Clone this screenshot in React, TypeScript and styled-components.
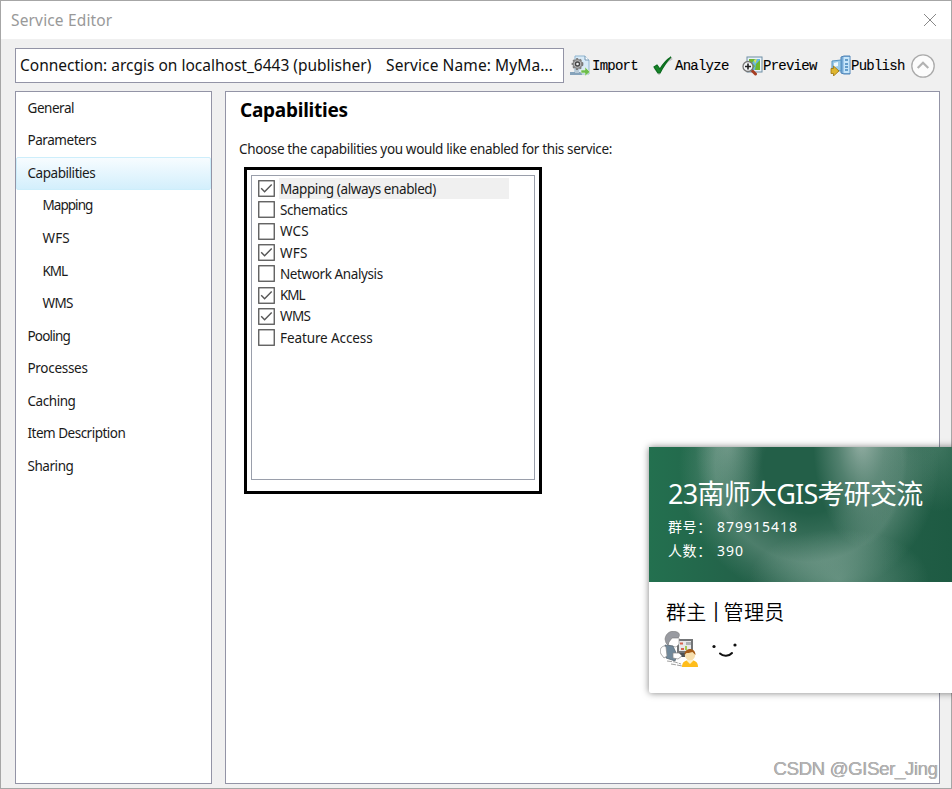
import React from 'react';
import styled, { createGlobalStyle } from 'styled-components';

const Global = createGlobalStyle`
  * { box-sizing: border-box; }
  html, body { margin: 0; padding: 0; overflow: hidden; }
  body { font-family: "Noto Sans", "Noto Sans CJK SC", sans-serif; color: #1a1a1a; }
`;

const Desktop = styled.div`
  position: relative;
  width: 952px;
  height: 789px;
  overflow: hidden;
`;

const Window = styled.div`
  width: 952px;
  height: 789px;
  display: flex;
  flex-direction: column;
  background: #f0f0f0;
  border: 1px solid #a6a6a6;
  overflow: hidden;
`;

const TitleBar = styled.header`
  height: 38px;
  flex: none;
  display: flex;
  align-items: center;
  justify-content: space-between;
  padding: 0 14px 0 10px;
  background: #fff;
`;

const Label = styled.span<{ $size: number; $spacing?: number; $color?: string }>`
  font-size: ${p => p.$size}px;
  letter-spacing: ${p => p.$spacing ?? 0}px;
  color: ${p => p.$color ?? '#1a1a1a'};
  line-height: 20px;
  white-space: pre;
`;

const Toolbar = styled.div`
  flex: none;
  height: 52px;
  display: flex;
  align-items: center;
  padding: 1px 15px 0 14px;
`;

const ConnectionBox = styled.div`
  width: 549px;
  height: 35px;
  flex: none;
  display: flex;
  align-items: center;
  justify-content: space-between;
  padding: 0 10px 2px 4px;
  border: 1.5px solid #9394a6;
  background: #fff;
`;

const ToolButton = styled.button<{ $left: number; $width: number; $gap: number }>`
  display: flex;
  align-items: center;
  gap: ${p => p.$gap}px;
  flex: none;
  width: ${p => p.$width}px;
  margin: 0 0 0 ${p => p.$left}px;
  padding: 0;
  border: 0;
  background: none;
  color: #000;
  font: 14px "Liberation Mono", monospace;
  letter-spacing: -0.75px;
  -webkit-text-stroke: 0.1px #000;
  svg { flex: none; }
`;

const CollapseButton = styled.button`
  flex: none;
  margin: 0 0 0 6px;
  padding: 0;
  border: 0;
  background: none;
  display: flex;
`;

const Body = styled.main`
  flex: none;
  height: 693px;
  display: grid;
  grid-template-columns: 197px 715px;
  column-gap: 13px;
  padding-left: 14px;
`;

const Panel = styled.section`
  border: 1.5px solid #9394a6;
  background: #fff;
`;

const NavItem = styled.div<{ $nested?: boolean; $selected?: boolean }>`
  height: 32.55px;
  display: flex;
  align-items: center;
  padding: 0 0 1px ${p => (p.$nested ? 25.5 : 10.5)}px;
  border: 1px solid ${p => (p.$selected ? '#cdeefb' : 'transparent')};
  border-radius: 2px;
  background: ${p => (p.$selected ? 'linear-gradient(#f7fcff, #d3effc)' : 'none')};
`;

const Content = styled(Panel)`
  display: flex;
  flex-direction: column;
  align-items: flex-start;
  padding: 5px 0 0 14px;
`;

const Heading = styled.h1`
  margin: 0;
  font-size: 19px;
  line-height: 26px;
  letter-spacing: -0.25px;
  color: #000;
`;

const Intro = styled.p`
  margin: 16px 0 8px -1px;
  height: 20px;
  display: flex;
`;

const ListFrame = styled.div`
  width: 298px;
  height: 327px;
  margin-left: 4px;
  padding: 5px 4px 11px 4px;
  border: 3px solid #000;
  display: flex;
`;

const CapabilityList = styled.div`
  flex: 1;
  padding: 2px 0 0 6px;
  border: 1px solid #9a9fab;
`;

const CapabilityRow = styled.label`
  height: 21.3px;
  display: flex;
  align-items: center;
  gap: 4px;
  svg { flex: none; }
`;

const CapabilityName = styled.span<{ $highlight?: boolean }>`
  width: 230px;
  height: 21.3px;
  display: flex;
  align-items: center;
  padding: 0 0 0 1px;
  background: ${p => (p.$highlight ? '#f0f0f0' : 'none')};
`;

const GroupCard = styled.aside`
  position: absolute;
  left: 649px;
  top: 447px;
  width: 310px;
  height: 246px;
  display: flex;
  flex-direction: column;
  border-radius: 2px;
  background: #fff;
  box-shadow: 0 0 7px rgba(0, 0, 0, 0.5);
`;

const GroupHeader = styled.div`
  height: 135px;
  display: flex;
  flex-direction: column;
  padding: 29px 0 0 19px;
  color: #fff;
  background:
    radial-gradient(ellipse 48px 110px at 212px -10px, rgba(215, 222, 219, .62), rgba(190, 205, 199, .3) 50%, transparent),
    radial-gradient(ellipse 34px 80px at 80px -5px, rgba(190, 205, 199, .36), transparent),
    radial-gradient(ellipse 90px 50px at 190px 132px, rgba(190, 212, 203, .36), transparent),
    radial-gradient(ellipse 130px 132px at 160px 20px, transparent 35%, rgba(165, 190, 180, .14) 52%, rgba(165, 190, 180, .32) 72%, rgba(165, 190, 180, .12) 88%, transparent 100%),
    radial-gradient(ellipse 40px 70px at 290px -5px, rgba(150, 185, 170, .28), transparent),
    linear-gradient(90deg, #23704f, #235f48 35%, #235f48 75%, #1d5a42);
`;

const GroupTitle = styled.h2`
  margin: 0 0 5px;
  font: 400 27px/36px "Noto Sans", "Noto Sans CJK SC", sans-serif;
  letter-spacing: -0.75px;
  white-space: nowrap;
`;

const GroupMeta = styled.div`
  display: flex;
  height: 24px;
  line-height: 19px;
  font-size: 14px;
`;

const MetaKey = styled.span`
  width: 49px;
  letter-spacing: 0.6px;
`;

const MetaValue = styled.span`
  letter-spacing: 1px;
`;

const GroupStaff = styled.div`
  display: flex;
  flex-direction: column;
  align-items: flex-start;
  padding: 14px 0 0 17px;
  color: #000;
`;

const StaffTitle = styled.div`
  height: 31px;
  display: flex;
  align-items: center;
  gap: 4px;
  font: 400 20px/31px "Noto Sans CJK SC", sans-serif;
  font-weight: 350;
  letter-spacing: 0.3px;
  white-space: nowrap;
`;

const StaffDivider = styled.span`
  width: 9px;
  text-align: center;
  font: 400 20px/28px "Noto Sans", sans-serif;
  padding-bottom: 3px;
`;

const Avatars = styled.div`
  display: flex;
  gap: 12px;
  margin: 4px 0 0 -6px;
`;

const Watermark = styled.div`
  position: absolute;
  right: 14px;
  bottom: 7px;
  font: 18.6px/26px "Liberation Sans", sans-serif;
  letter-spacing: -0.35px;
  color: #b4b4b4;
  text-shadow: -0.5px -0.5px 0 #8f8f8f, 1px 1px 0 #fff;
  white-space: nowrap;
`;

const CloseIcon = () => (
  <svg width="14" height="14" viewBox="0 0 14 14" fill="none" stroke="#888" strokeWidth="1">
    <path d="M1 1l12 12M13 1L1 13" />
  </svg>
);

const ImportIcon = () => (
  <svg width="20" height="22" viewBox="0 0 20 22">
    <path d="M5 1h10l4 4v14H5z" fill="#d8eaf7" stroke="#8fb5d0" />
    <path d="M15 1v4h4" fill="#fff" stroke="#7296b2" />
    <path d="M0 17h12v3H0z" fill="#86a3bb" />
    <path d="M5 14h4v4H5z" fill="#b7c9d6" />
    <circle cx="7.500" cy="9" r="5" fill="#a8a8a8" stroke="#777" strokeWidth="1.8" strokeDasharray="2 1.6" />
    <circle cx="7.500" cy="9" r="4.3" fill="#b6b6b6" stroke="#808080" />
    <circle cx="7.500" cy="9" r="2" fill="#eee" stroke="#444" strokeWidth="1.3" />
    <path d="M11 15h4v-3l5 5-5 4v-3h-4z" fill="#6dbd4b" stroke="#e3f3dc" strokeWidth=".6" />
  </svg>
);

const CheckIcon = () => (
  <svg width="20" height="19" viewBox="0 0 20 19">
    <path d="M2 11.5l4 5.5C9 10 13 5 19 2" fill="none" stroke="#c4c4c4" strokeWidth="3" />
    <path d="M1 11l3-2 3 4C10 8 13 4 18 1 13 6 10 11 7 17H5z" fill="#168528" stroke="#0b6c1e" strokeWidth="1.2" />
  </svg>
);

const PreviewIcon = () => (
  <svg width="21" height="20" viewBox="0 0 21 20">
    <rect x="5" y="1" width="15" height="15" fill="#e9f3fa" stroke="#6f8ea3" />
    <path d="M7 3h11v11H7z" fill="#64b5e4" />
    <path d="M7 3h6l-3 4 3 3-3 4H7zM14 8l4-4v10h-5z" fill="#70b62c" />
    <path d="M12 4l3-1-2 5z" fill="#e5e84f" />
    <path d="M9.5 14l4 4" stroke="#a63d22" strokeWidth="3" strokeLinecap="round" />
    <circle cx="6" cy="10.5" r="5" fill="#f4f6f8" stroke="#777" strokeWidth="1.3" />
    <path d="M3 10.5h6M6 7.5v6" stroke="#222" strokeWidth="1.6" />
  </svg>
);

const PublishIcon = () => (
  <svg width="21" height="21" viewBox="0 0 21 21">
    <path d="M11 2l3-1h6v18h-6l-3-1z" fill="#78acd8" stroke="#5084b7" />
    <path d="M13.5 2h6v16h-6z" fill="#c7e6fa" />
    <path d="M15 5h3M15 9h3M15 12h3M15 15h3" stroke="#4485bb" strokeWidth="1.4" />
    <path d="M2 6l9-1v11l-9-1z" fill="#9ccbea" stroke="#5693c1" />
    <path d="M4 8l4-1v4l-4 1z" fill="#eff9ff" />
    <path d="M1 13.5h2.500v-2.500l5.500 5-5.500 5V18.500H1z" fill="#dfb62f" stroke="#997412" strokeWidth=".8" />
  </svg>
);

const CollapseIcon = () => (
  <svg width="24" height="24" viewBox="0 0 24 24" fill="none">
    <circle cx="12" cy="12" r="11.2" fill="#fcfcfc" stroke="#aaa" strokeWidth="1.3" />
    <path d="M6.7 14L12 8.8l5.3 5.2" stroke="#b2b2b2" strokeWidth="2.2" />
  </svg>
);

const CheckBox = ({ checked }: { checked: boolean }) => (
  <svg width="17" height="17" viewBox="0 0 17 17" fill="none">
    <rect x=".75" y=".75" width="15.5" height="15.5" fill="#fff" stroke="#555" strokeWidth="1.3" />
    {checked && <path d="M3.2 8.3l3.4 3.5 7.1-7.3" stroke="#555" strokeWidth="1.4" />}
  </svg>
);

const OwnerAvatar = () => (
  <svg width="38" height="38" viewBox="0 0 38 38">
    <path d="M17 8h16v14H17z" fill="#737577" />
    <path d="M19 10h12v10H19z" fill="#e7e9ea" />
    <path d="M20 11.500h3v2h-3zM21 17h3v2h-3z" fill="#d7654f" />
    <path d="M25 15h2v4h-2z" fill="#a5ca53" />
    <path d="M26 11h5v3h-5z" fill="#adb1b4" />
    <path d="M17 22h8v4h-8z" fill="#4d5154" />
    <path d="M8 8l5-4 6 3v6l-3 3-8-2z" fill="#fff" stroke="#999" strokeWidth=".7" />
    <path d="M5 8C6 1 12-1 17 1c3 1 3 4 1 6l-6 0-3 4-1 3-2-2z" fill="#999ba1" stroke="#777" strokeWidth=".6" />
    <path d="M5 14l8 1 4 9-2 6-9-3z" fill="#70889a" stroke="#55636e" strokeWidth=".7" />
    <path d="M5 15c-4 0-6 4-4 8l3 4 3-2-1-9z" fill="#fff" stroke="#888" strokeWidth=".7" />
    <path d="M13 22l6 0 3 3-4 3-5-1z" fill="#fff" stroke="#888" strokeWidth=".7" />
    <path d="M7 30l8 1 6 2M11 33l6 1 5 1" stroke="#888" strokeWidth=".8" fill="none" strokeDasharray="5 1" />
    <path d="M22 36c0-5 3-7 8-7s8 2 8 7z" fill="#ffbd1b" />
    <path d="M27 28h6v2l-3 3-3-3z" fill="#fff1c6" />
    <circle cx="30" cy="24" r="5.2" fill="#f7dfae" />
    <path d="M24.500 24c0-8 11-8 11 0l-3-3c-3 1-5 1-6 1z" fill="#a65c18" />
  </svg>
);

const SmileAvatar = () => (
  <svg width="30" height="38" viewBox="0 0 30 38">
    <circle cx="4" cy="15.500" r="1.6" fill="#111" />
    <circle cx="25" cy="14" r="1.6" fill="#111" />
    <path d="M10 22.500c3 3 9 3 12-.5" fill="none" stroke="#111" strokeWidth="2" strokeLinecap="round" />
  </svg>
);

const navItems: { name: string; nested?: boolean; spacing?: number }[] = [
  { name: 'General' },
  { name: 'Parameters' },
  { name: 'Capabilities' },
  { name: 'Mapping', nested: true, spacing: -0.95 },
  { name: 'WFS', nested: true, spacing: 0.1 },
  { name: 'KML', nested: true, spacing: -1.1 },
  { name: 'WMS', nested: true, spacing: -0.6 },
  { name: 'Pooling', spacing: -0.8 },
  { name: 'Processes', spacing: -0.3 },
  { name: 'Caching' },
  { name: 'Item Description', spacing: -0.5 },
  { name: 'Sharing' },
];

const capabilities: { name: string; checked: boolean; spacing?: number }[] = [
  { name: 'Mapping (always enabled)', checked: true },
  { name: 'Schematics', checked: false },
  { name: 'WCS', checked: false, spacing: 0.2 },
  { name: 'WFS', checked: true, spacing: 0.2 },
  { name: 'Network Analysis', checked: false },
  { name: 'KML', checked: true, spacing: -1.1 },
  { name: 'WMS', checked: true, spacing: -0.6 },
  { name: 'Feature Access', checked: false, spacing: -0.1 },
];

export default function App() {
  return (
    <Desktop>
      <Global />
      <Window>
        <TitleBar>
          <Label $size={15.5} $spacing={0.15} $color="#999">Service Editor</Label>
          <CloseIcon />
        </TitleBar>
        <Toolbar>
          <ConnectionBox>
            <Label $size={15.5} $color="#111">Connection: arcgis on localhost_6443 (publisher)</Label>
            <Label $size={15.5} $spacing={0.1} $color="#111">Service Name: MyMa...</Label>
          </ConnectionBox>
          <ToolButton $left={6} $width={69} $gap={2}><ImportIcon />Import</ToolButton>
          <ToolButton $left={14} $width={76} $gap={2}><CheckIcon />Analyze</ToolButton>
          <ToolButton $left={13} $width={76} $gap={0}><PreviewIcon />Preview</ToolButton>
          <ToolButton $left={12} $width={75} $gap={0}><PublishIcon />Publish</ToolButton>
          <CollapseButton><CollapseIcon /></CollapseButton>
        </Toolbar>
        <Body>
          <Panel>
            {navItems.map(item => (
              <NavItem key={item.name} $nested={item.nested} $selected={item.name === 'Capabilities'}>
                <Label $size={13.5} $spacing={item.spacing ?? -0.45}>{item.name}</Label>
              </NavItem>
            ))}
          </Panel>
          <Content>
            <Heading>Capabilities</Heading>
            <Intro><Label $size={13.5} $spacing={-0.35}>Choose the capabilities you would like enabled for this service:</Label></Intro>
            <ListFrame>
              <CapabilityList>
                {capabilities.map((c, i) => (
                  <CapabilityRow key={c.name}>
                    <CheckBox checked={c.checked} />
                    <CapabilityName $highlight={i === 0}>
                      <Label $size={13.5} $spacing={c.spacing ?? -0.4}>{c.name}</Label>
                    </CapabilityName>
                  </CapabilityRow>
                ))}
              </CapabilityList>
            </ListFrame>
          </Content>
        </Body>
      </Window>
      <GroupCard>
        <GroupHeader>
          <GroupTitle>23南师大GIS考研交流</GroupTitle>
          <GroupMeta><MetaKey>群号：</MetaKey><MetaValue>879915418</MetaValue></GroupMeta>
          <GroupMeta><MetaKey>人数：</MetaKey><MetaValue>390</MetaValue></GroupMeta>
        </GroupHeader>
        <GroupStaff>
          <StaffTitle>群主<StaffDivider>|</StaffDivider>管理员</StaffTitle>
          <Avatars><OwnerAvatar /><SmileAvatar /></Avatars>
        </GroupStaff>
      </GroupCard>
      <Watermark>CSDN @GISer_Jing</Watermark>
    </Desktop>
  );
}
